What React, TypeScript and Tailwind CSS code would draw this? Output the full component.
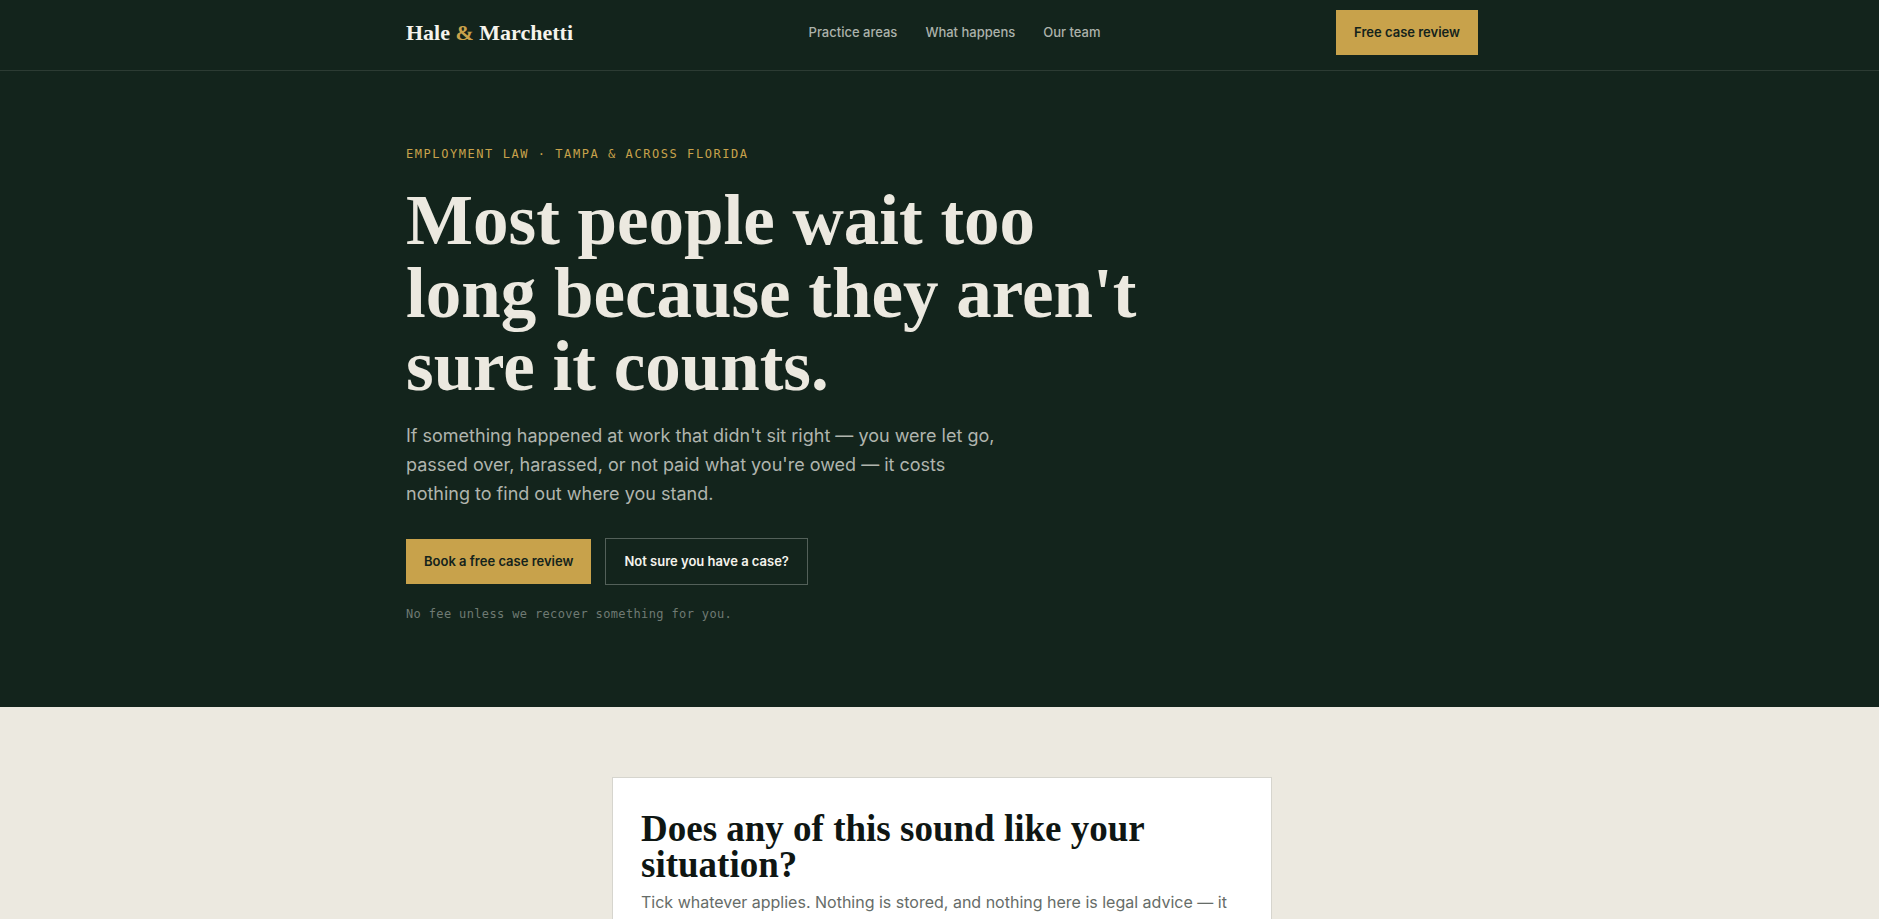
import clsx from "clsx";

const navLinks = [
  { label: "Practice areas", href: "#practice" },
  { label: "What happens", href: "#process" },
  { label: "Our team", href: "#team" },
];

const Container: React.FC<{
  className?: string;
  children?: React.ReactNode;
}> = ({ className, children }) => (
  <div className={clsx("max-w-[1120px] mx-auto px-6", className)}>
    {children}
  </div>
);

const Button: React.FC<{
  outline?: boolean;
  children?: React.ReactNode;
}> = ({ outline, children }) => (
  <button
    type="button"
    className={clsx(
      "px-[18px] py-3 text-[13px]/[21px] font-semibold cursor-pointer",
      outline
        ? "border border-[#536059] text-[#f5f3ec]"
        : "bg-[#c8a24b] text-[#14231c]",
    )}
  >
    {children}
  </button>
);

const Header = () => (
  <header className="bg-[#13241c] border-b border-[#2c3b33] pl-[5px]">
    <Container className="flex items-center justify-between pt-[10px] pb-[15px]">
      <a
        href="#top"
        className="font-['Liberation_Serif',serif] text-[22px]/[32px] font-bold text-[#f5f3ec]"
      >
        Hale <span className="text-[#c8a24b]">&amp;</span> Marchetti
      </a>
      <nav className="flex gap-7 text-[13px]/[21px] font-medium text-[#acb2ab]">
        {navLinks.map(({ label, href }) => (
          <a key={href} href={href}>
            {label}
          </a>
        ))}
      </nav>
      <Button>Free case review</Button>
    </Container>
  </header>
);

const Hero = () => (
  <section className="bg-[#13241c] pl-[5px]">
    <Container className="pt-[73px] pb-[83px]">
      <p className="font-['DejaVu_Sans_Mono',monospace] text-[12px]/[20px] tracking-[0.13em] uppercase text-[#c8a24b]">
        Employment law · Tampa &amp; across Florida
      </p>
      <h1 className="mt-5 max-w-[760px] font-['Liberation_Serif',serif] text-[71px]/[73px] font-bold text-[#ece9e0]">
        Most people wait too long because they aren't sure it counts.
      </h1>
      <p className="mt-[18px] max-w-[600px] text-[18px]/[29px] text-[#b0b5ae]">
        If something happened at work that didn't sit right — you were let go,
        passed over, harassed, or not paid what you're owed — it costs nothing
        to find out where you stand.
      </p>
      <div className="mt-[30px] flex flex-wrap items-center gap-[14px]">
        <Button>Book a free case review</Button>
        <Button outline>Not sure you have a case?</Button>
      </div>
      <p className="mt-[19px] font-['DejaVu_Sans_Mono',monospace] text-[12px]/[20px] tracking-[0.03em] text-[#6f7a73]">
        No fee unless we recover something for you.
      </p>
    </Container>
  </section>
);

const Screener = () => (
  <section className="py-[70px] pl-[5px]">
    <div className="max-w-[660px] mx-auto bg-white border border-[#d6d5ce] px-7 py-[33px]">
      <h2 className="font-['Liberation_Serif',serif] text-[37px]/[36px] font-bold text-[#0f1613]">
        Does any of this sound like your situation?
      </h2>
      <p className="mt-[6px] text-[16px]/[26px] text-[#666c68]">
        Tick whatever applies. Nothing is stored, and nothing here is legal
        advice — it
      </p>
    </div>
  </section>
);

const App = () => (
  <div
    id="top"
    className="h-screen overflow-hidden bg-[#ece9e0] font-[Inter,sans-serif]"
  >
    <Header />
    <Hero />
    <Screener />
  </div>
);

export default App;
